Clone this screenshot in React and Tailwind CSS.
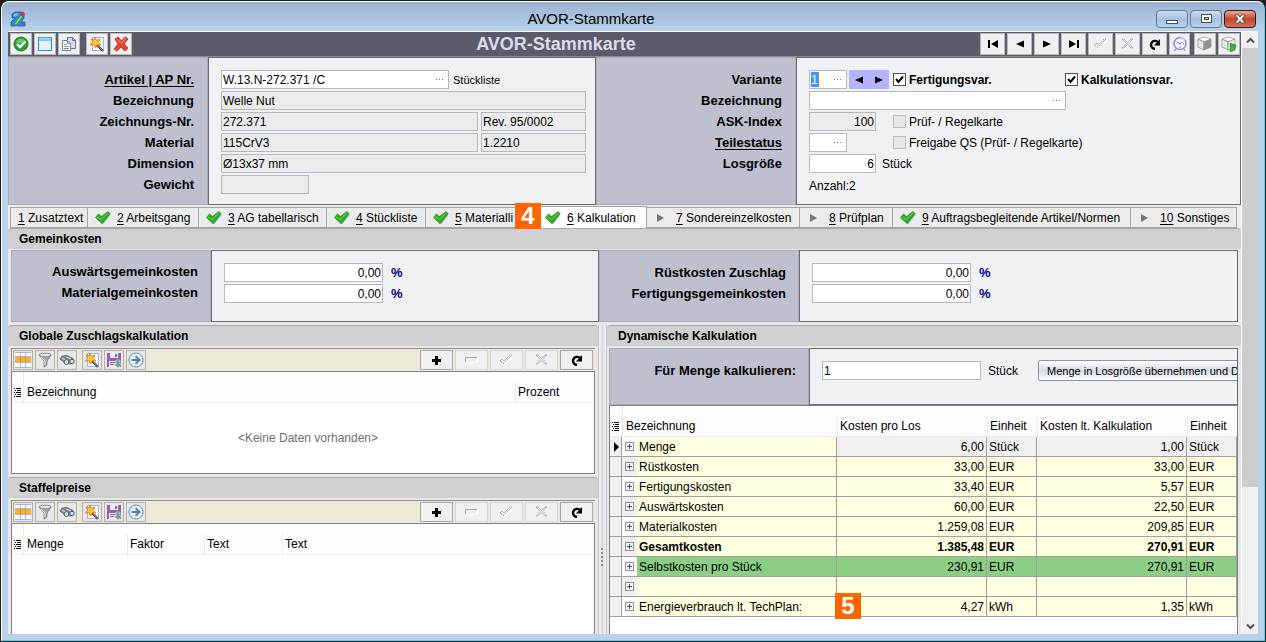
import React from 'react';
import clsx from 'clsx';

const tabs = [
  { key: '1', label: 'Zusatztext', width: 'w-[78px]' },
  { key: '2', label: 'Arbeitsgang', icon: 'check', width: 'w-[111px]' },
  { key: '3', label: 'AG tabellarisch', icon: 'check', width: 'w-[128px]' },
  { key: '4', label: 'Stückliste', icon: 'check', width: 'w-[99px]' },
  { key: '5', label: 'Materialli', icon: 'check', width: 'w-[112px]' },
  { key: '6', label: 'Kalkulation', icon: 'check', width: 'w-[109px]', active: true, badge: '4' },
  { key: '7', label: 'Sondereinzelkosten', icon: 'arrow', width: 'w-[153px]' },
  { key: '8', label: 'Prüfplan', icon: 'arrow', width: 'w-[93px]' },
  { key: '9', label: 'Auftragsbegleitende Artikel/Normen', icon: 'check', width: 'w-[238px]' },
  { key: '10', label: 'Sonstiges', icon: 'arrow', width: 'w-[106px]' }
];

const costRows = [
  { name: 'Menge', lot: '6,00', unit: 'Stück', calc: '1,00', kind: 'current' },
  { name: 'Rüstkosten', lot: '33,00', unit: 'EUR', calc: '33,00' },
  { name: 'Fertigungskosten', lot: '33,40', unit: 'EUR', calc: '5,57' },
  { name: 'Auswärtskosten', lot: '60,00', unit: 'EUR', calc: '22,50' },
  { name: 'Materialkosten', lot: '1.259,08', unit: 'EUR', calc: '209,85' },
  { name: 'Gesamtkosten', lot: '1.385,48', unit: 'EUR', calc: '270,91', kind: 'bold' },
  { name: 'Selbstkosten pro Stück', lot: '230,91', unit: 'EUR', calc: '270,91', kind: 'green' },
  { name: '', lot: '', unit: '', calc: '' },
  { name: 'Energieverbrauch lt. TechPlan:', lot: '4,27', unit: 'kWh', calc: '1,35', badge: '5' }
];

/* ---------- icons ---------- */

const AppIcon = () => (
  <svg width="16" height="16" viewBox="0 0 16 16" aria-hidden="true">
    <path d="M2 3l3-2h6l3 2v4l-3 4h4v4H8l-1-1-2 1H1v-4l4-4H2z" fill="#2f86d8" stroke="#1b4f96" strokeWidth=".7" />
    <path d="M3 4l3-2 3 1-4 3z" fill="#7fc0f2" />
    <path d="M5 12l6-8 2 1-6 8-3 1z" fill="#8ede5a" stroke="#3d8a25" strokeWidth=".5" />
    <circle cx="12.5" cy="3" r="2.200" fill="#e0343a" />
  </svg>
);

const OkIcon = () => (
  <svg width="16" height="16" viewBox="0 0 16 16" aria-hidden="true">
    <circle cx="8" cy="8" r="7" fill="#2d9e2d" stroke="#1d7a22" />
    <path d="M3 6a5.500 5.500 0 0 1 10 0c-3 2-7 2-10 0z" fill="#6cc765" />
    <path d="M4 8l3 3 5.500-5.500" fill="none" stroke="#fff" strokeWidth="2.400" />
  </svg>
);

const WindowIcon = () => (
  <svg width="16" height="16" viewBox="0 0 16 16" aria-hidden="true">
    <rect x="1.5" y="1.5" width="13" height="13" fill="#eaf0ff" stroke="#1e90ff" />
    <path d="M2 4h12" stroke="#1e90ff" />
    <path d="M2 2.500h12" stroke="#a8dcff" strokeWidth="1.5" />
  </svg>
);

const CopyIcon = () => (
  <svg width="16" height="16" viewBox="0 0 16 16" aria-hidden="true">
    <path d="M6.500 1.500h5l3 3v8h-8z" fill="#dcd6ee" stroke="#77699c" />
    <path d="M11.500 1.500v3h3" fill="none" stroke="#77699c" />
    <path d="M1.500 4.500h5l3 3v7h-8z" fill="#fff" stroke="#6f84ad" />
    <path d="M6.500 4.500v3h3M3 8.500h3M3 10.500h5M3 12.500h5" fill="none" stroke="#7b8fb5" />
  </svg>
);

const WandIcon = () => (
  <svg width="16" height="16" viewBox="0 0 16 16" aria-hidden="true">
    <rect x="3.5" y="1.5" width="11" height="13" fill="#f6f9ff" stroke="#9fb4e0" />
    <path d="M8 9l6 6" stroke="#4a4038" strokeWidth="2.2" />
    <path d="M9 10l5 5" stroke="#b9a88c" strokeWidth=".7" />
    <path d="M6 1l1.500 3.500L11 3l-1.500 3.500L12 9l-4-.2L6.500 12 5 8.800 1 9l2.800-3L2 3l3.200 1z" fill="#ffc93c" stroke="#e07a10" strokeWidth=".9" />
  </svg>
);

const DeleteIcon = () => (
  <svg width="16" height="16" viewBox="0 0 16 16" aria-hidden="true">
    <path d="M2 3l3-2 3.500 4L12 1l3 2-4 5 4 4-3 3-4-4-4 4-3-2 4-5z" fill="#e8452e" stroke="#b32313" strokeWidth=".8" />
    <path d="M3.500 3l5 4 4-4.500" fill="none" stroke="#ff9280" />
  </svg>
);

const FirstIcon = () => (
  <svg width="12" height="10" viewBox="0 0 12 10" aria-hidden="true">
    <path d="M1 1h2v8H1zM11 1v8L4 5z" fill="#000" />
  </svg>
);

const PrevIcon = () => (
  <svg width="10" height="10" viewBox="0 0 10 10" aria-hidden="true">
    <path d="M9 1.500v7L1 5z" fill="#000" />
  </svg>
);

const NextIcon = () => (
  <svg width="10" height="10" viewBox="0 0 10 10" aria-hidden="true">
    <path d="M1 1.500v7L9 5z" fill="#000" />
  </svg>
);

const LastIcon = () => (
  <svg width="12" height="10" viewBox="0 0 12 10" aria-hidden="true">
    <path d="M9 1h2v8H9zM1 1v8l7-4z" fill="#000" />
  </svg>
);

const PostIcon = () => (
  <svg width="15" height="12" viewBox="0 0 15 12" aria-hidden="true">
    <path d="M2 8l2-2 2 2 6-6 2 1-8 8z" fill="#fff" />
    <path d="M1 7l2-2 2 2 6-6h2L5 9.500z" fill="#f3f3f3" stroke="#a0a0a0" strokeDasharray="2 1" />
  </svg>
);

const CancelIcon = () => (
  <svg width="13" height="12" viewBox="0 0 13 12" aria-hidden="true">
    <path d="M3 2l9 9M12 2l-9 9" stroke="#fff" strokeWidth="2" />
    <path d="M1 1h2l3.500 3.500L10 1h2L8 5.500l4 4.500h-2L6.500 6.500 3 10H1l4-4.500z" fill="#f0f0f0" stroke="#a4a4a4" strokeWidth=".8" />
  </svg>
);

const RefreshIcon = () => (
  <svg width="12" height="12" viewBox="0 0 12 12" aria-hidden="true">
    <path d="M6 11C2.500 10.500 1.300 7.500 2.500 5 3.800 2.600 6.800 2.200 9 4" fill="none" stroke="#000" strokeWidth="2.4" />
    <path d="M11 1v6.500H5z" fill="#000" />
  </svg>
);

const ClockIcon = () => (
  <svg width="16" height="16" viewBox="0 0 16 16" aria-hidden="true">
    <path d="M4 13l-2 2M12 13l1 2" stroke="#9a9acb" strokeWidth="1.5" />
    <circle cx="8" cy="7.500" r="6" fill="#edf0ff" stroke="#8c8fd0" strokeWidth="1.5" />
    <path d="M5 6l3 2 2-2M8 12v-1M12 8h-1" fill="none" stroke="#6b7099" />
    <path d="M9 1l4 3" stroke="#c9cdf6" strokeWidth="2" />
  </svg>
);

const CubeIcon = ({ green }) => (
  <svg width="16" height="16" viewBox="0 0 16 16" aria-hidden="true">
    <path d="M1 3l6-2 7 2-6 3z" fill="#fafafa" stroke="#9b9b9b" strokeWidth=".7" />
    <path d="M1 3l6 3v8l-6-3z" fill="#dcdee0" stroke="#8d8d8d" strokeWidth=".7" />
    <path d="M7 6l7-3v8l-7 3z" fill={green ? '#f1f1f1' : '#8f9295'} stroke="#8a8a8a" strokeWidth=".7" />
    <path d="M2 5v5M4 6v5M5.500 6v6" stroke="#f4f4f4" strokeWidth=".8" />
    {green && <path d="M9 7l6 2-1 5-5 2z" fill="#3fae35" stroke="#2a8323" strokeWidth=".5" />}
  </svg>
);

const GridIcon = () => (
  <svg width="16" height="16" viewBox="0 0 16 16" aria-hidden="true">
    <rect width="16" height="16" fill="#aeb4c4" />
    <path d="M0 1h5v3H0zM6 1h4v3H6zM11 1h5v3h-5zM0 11h5v4H0zM6 11h4v4H6zM11 11h5v4h-5z" fill="#fff" />
    <path d="M0 5h16v5H0z" fill="#f7ac3e" />
    <path d="M5.500 5v5M10.500 5v5" stroke="#d98c23" />
  </svg>
);

const FilterIcon = () => (
  <svg width="16" height="16" viewBox="0 0 16 16" aria-hidden="true">
    <path d="M2 3l5 6v6l3-2V9l4-6z" fill="#a9a9a9" stroke="#6f6f6f" strokeWidth=".8" />
    <path d="M4 5l4 4v4" fill="none" stroke="#eee" />
    <ellipse cx="8" cy="3" rx="6" ry="1.800" fill="#e4e4e4" stroke="#777" strokeWidth=".8" />
  </svg>
);

const BinocularsIcon = () => (
  <svg width="16" height="16" viewBox="0 0 16 16" aria-hidden="true">
    <path d="M1 7l2-3 5-.5 6 3 .5 4-3 1.500L6 11z" fill="#85898d" stroke="#5f6367" strokeWidth=".8" />
    <path d="M3 6l5 3M7 5l5 2" stroke="#e4e6e8" />
    <circle cx="7.500" cy="10" r="2.400" fill="#cfe2f2" stroke="#4f5b66" />
    <circle cx="13" cy="9.500" r="2.300" fill="#cfe2f2" stroke="#4f5b66" />
  </svg>
);

const SaveIcon = () => (
  <svg width="16" height="16" viewBox="0 0 16 16" aria-hidden="true">
    <path d="M1 1h14v14H1z" fill="#8e63ad" />
    <path d="M4 1h8v5H4zM3 9h10v6H3z" fill="#f2ecf7" />
    <path d="M9 2h2v3H9zM4 10h7v1H4zM4 12h5v1H4z" fill="#8e63ad" />
    <path d="M10 8h4v4h2l-4 4-4-4h2z" fill="#6aa58c" stroke="#f0f0f0" strokeWidth=".5" />
  </svg>
);

const GoIcon = () => (
  <svg width="16" height="16" viewBox="0 0 16 16" aria-hidden="true">
    <circle cx="8" cy="8" r="7" fill="#fafcff" stroke="#4d88c0" />
    <path d="M3.500 8h7M7.500 4l4 4-4 4" fill="none" stroke="#3f7fbe" strokeWidth="2" />
  </svg>
);

const GreenCheck = () => (
  <svg width="16" height="14" viewBox="0 0 16 14" aria-hidden="true">
    <path d="M2 8l2-2 3 2.500L14 2l1.500 2L8 13.500z" fill="#666" opacity=".5" />
    <path d="M.5 6.500L3.500 3l3 2.500L13 .5l2 2-8 10z" fill="#2bb021" stroke="#1f8a1b" strokeWidth=".7" />
    <path d="M2 6.200l4.500 2L13 2" fill="none" stroke="#74d866" strokeWidth=".9" />
  </svg>
);

const ListIcon = () => (
  <svg width="7" height="9" viewBox="0 0 7 9" aria-hidden="true" className="shrink-0">
    <path d="M0 .5h1M2 .5h5M1 2.500h1M3 2.500h4M0 4.500h1M2 4.500h5M1 6.500h1M3 6.500h4M0 8.500h1M2 8.500h5" stroke="#000" />
  </svg>
);

const ExpandIcon = () => (
  <svg width="9" height="9" viewBox="0 0 9 9" aria-hidden="true">
    <rect x=".5" y=".5" width="8" height="8" fill="#fbfbfb" stroke="#919191" />
    <path d="M2 4.500h5M4.500 2v5" stroke="#35508f" />
  </svg>
);

/* ---------- building blocks ---------- */

const ToolButton = ({ label, className, children }) => (
  <button
    type="button"
    aria-label={label}
    className={clsx('flex h-[22px] shrink-0 items-center justify-center border border-[#b9b9b9] bg-[#f0f0f0]', className)}
  >
    {children}
  </button>
);

const LookupButton = () => (
  <button type="button" aria-label="Auswählen" className="flex h-full w-4 shrink-0 items-center justify-center">
    <svg width="8" height="2" viewBox="0 0 8 2" aria-hidden="true">
      <path d="M0 0h1v1H0zM3 0h1v1H3zM6 0h1v1H6z" fill="#777" />
    </svg>
  </button>
);

const Field = ({ id, label, value = '', editable, right, lookup, className }) => (
  <div
    className={clsx(
      'flex h-[19px] shrink-0 items-center border border-[#b5b9c1]',
      editable ? 'bg-white' : 'bg-[#ebebec]',
      className
    )}
  >
    <input
      id={id}
      aria-label={label}
      type="text"
      defaultValue={value}
      readOnly={!editable}
      className={clsx('h-full w-full min-w-0 bg-transparent px-px outline-none', right && 'text-right')}
    />
    {lookup && <LookupButton />}
  </div>
);

const CheckField = ({ label, checked, bold, className }) => (
  <label className={clsx('flex shrink-0 items-center gap-[3px] whitespace-nowrap', bold && 'font-bold', className)}>
    <span className="relative flex size-[13px]">
      <input
        type="checkbox"
        defaultChecked={checked}
        disabled={!checked}
        className="peer size-[13px] appearance-none border border-[#555] bg-white disabled:border-[#bcbcbc] disabled:bg-[#e6e6e6]"
      />
      <svg viewBox="0 0 13 13" className="pointer-events-none absolute inset-0 hidden peer-checked:block" aria-hidden="true">
        <path d="M3 6l2.500 3L10 3.500" fill="none" stroke="#000" strokeWidth="2" />
      </svg>
    </span>
    {label}
  </label>
);

const LabelColumn = ({ items, className }) => (
  <div className={clsx('flex flex-col items-end gap-0.5 border border-[#a9abbb] bg-[#bec0cf] text-[13px] font-bold', className)}>
    {items.map(item => (
      <label
        key={item.id}
        htmlFor={item.id}
        className={clsx('flex h-[19px] items-center whitespace-nowrap', item.link && 'underline underline-offset-2')}
      >
        {item.text}
      </label>
    ))}
  </div>
);

const SectionTitle = ({ children }) => (
  <h2 className="flex h-[21px] shrink-0 items-center rounded-t-sm border-t border-[#a8a8a8] bg-[#d0d0d0] pl-[11px] text-xs font-bold">
    {children}
  </h2>
);

const Badge = ({ children, className }) => (
  <span className={clsx('absolute z-10 flex size-[26px] items-center justify-center bg-[#ff6600] text-2xl leading-none font-bold text-white', className)}>
    {children}
  </span>
);

const PercentField = ({ id }) => (
  <div className="flex items-center gap-2">
    <Field id={id} value="0,00" editable right className="w-[159px]" />
    <span className="text-[13px] font-bold text-[#00008b]">%</span>
  </div>
);

const SmallButton = ({ label, className, children }) => (
  <button
    type="button"
    aria-label={label}
    className={clsx('flex size-5 items-center justify-center border border-[#b0b0b0] bg-[#e8e8e8]', className)}
  >
    {children}
  </button>
);

const WideButton = ({ label, disabled, children }) => (
  <button
    type="button"
    aria-label={label}
    disabled={disabled}
    className="flex h-5 w-[33px] items-center justify-center border border-[#a8a8a8] bg-[#f0f0f0] disabled:border-[#d8d8d8]"
  >
    {children}
  </button>
);

const GridToolbar = () => (
  <div className="flex h-[23px] shrink-0 items-start justify-between border-t border-l border-[#8f8f94] bg-[#ece9d8] pt-px pr-0.5 pl-px">
    <div className="flex gap-0.5">
      <SmallButton label="Spalten"><GridIcon /></SmallButton>
      <SmallButton label="Filter"><FilterIcon /></SmallButton>
      <SmallButton label="Suchen"><BinocularsIcon /></SmallButton>
      <SmallButton label="Assistent" className="ml-[3px]"><WandIcon /></SmallButton>
      <SmallButton label="Speichern"><SaveIcon /></SmallButton>
      <SmallButton label="Weiter"><GoIcon /></SmallButton>
    </div>
    <div className="flex gap-0.5">
      <WideButton label="Hinzufügen">
        <svg width="9" height="9" viewBox="0 0 9 9" aria-hidden="true">
          <path d="M3 0h3v3h3v3H6v3H3V6H0V3h3z" fill="#000" />
        </svg>
      </WideButton>
      <WideButton label="Entfernen" disabled>
        <svg width="13" height="6" viewBox="0 0 13 6" aria-hidden="true">
          <path d="M1 5.500h11.500V1" fill="none" stroke="#fff" />
          <path d="M.5 5V.5H12" fill="none" stroke="#a9a9a9" />
        </svg>
      </WideButton>
      <WideButton label="Übernehmen" disabled><PostIcon /></WideButton>
      <WideButton label="Abbrechen" disabled><CancelIcon /></WideButton>
      <WideButton label="Aktualisieren"><RefreshIcon /></WideButton>
    </div>
  </div>
);

const HeadCell = ({ children, first }) => (
  <th scope="col" className="h-[31px] border-b border-[#e3eefb] bg-[#fdfdfd] p-0 text-left font-normal">
    <div className={clsx('flex h-[30px] flex-col justify-end', first && 'border-l border-[#e3eefb]')}>
      <div className={clsx('flex h-5 items-center whitespace-nowrap', first ? 'pl-[3px]' : 'border-l border-[#e3eefb] pl-0.5')}>
        {children}
      </div>
    </div>
  </th>
);

const ListHead = () => (
  <th scope="col" aria-label="Zeilen" className="h-[31px] border-b border-[#e3eefb] bg-[#fdfdfd] p-0 pt-2.5">
    <div className="flex h-5 items-center pl-0.5"><ListIcon /></div>
  </th>
);

/* ---------- page parts ---------- */

const TitleBar = () => (
  <header className="flex h-[29px] shrink-0 items-center bg-gradient-to-b from-[#99b3d2] to-[#b9d1ea] pt-1 pr-2 pl-2">
    <AppIcon />
    <div className="flex-1 text-center text-[15px]">AVOR-Stammkarte</div>
    <div className="flex gap-0.5">
      <button type="button" aria-label="Minimieren" className="flex h-[18px] w-8 items-end justify-center rounded-sm border border-[#5d7898] bg-gradient-to-b from-[#cfdff1] via-[#a5bfdd] to-[#bdd5ec] pb-[3px]">
        <span className="h-1 w-3 border border-[#44505f] bg-white" />
      </button>
      <button type="button" aria-label="Maximieren" className="flex h-[18px] w-8 items-center justify-center rounded-sm border border-[#5d7898] bg-gradient-to-b from-[#cfdff1] via-[#a5bfdd] to-[#bdd5ec]">
        <svg width="11" height="9" viewBox="0 0 11 9" aria-hidden="true">
          <rect x=".5" y=".5" width="10" height="8" fill="#fff" stroke="#44505f" />
          <rect x="3.500" y="3.500" width="4" height="2" fill="#a5bfdd" stroke="#44505f" />
        </svg>
      </button>
      <button type="button" aria-label="Schließen" className="flex h-[18px] w-8 items-center justify-center rounded-sm border border-[#43131a] bg-gradient-to-b from-[#e6a79b] via-[#c4412d] to-[#d2705a]">
        <svg width="12" height="10" viewBox="0 0 13 10" aria-hidden="true">
          <path d="M1 .5h3.500l2 2.500 2-2.500H12L8.500 5 12 9.500H8.500l-2-2.500-2 2.500H1L4.500 5z" fill="#fff" stroke="#4b4550" strokeWidth=".9" />
        </svg>
      </button>
    </div>
  </header>
);

const MainToolbar = () => (
  <div className="flex h-[25px] shrink-0 items-center border-b border-[#8e8e92] bg-[#5a5c6c] pr-px pl-0.5">
    <div className="flex gap-0.5">
      <ToolButton label="OK" className="w-[22px]"><OkIcon /></ToolButton>
      <ToolButton label="Fenster" className="w-[22px]"><WindowIcon /></ToolButton>
      <ToolButton label="Kopieren" className="w-[22px]"><CopyIcon /></ToolButton>
      <ToolButton label="Assistent" className="ml-1 w-[22px]"><WandIcon /></ToolButton>
      <ToolButton label="Löschen" className="w-[22px]"><DeleteIcon /></ToolButton>
    </div>
    <h1 className="flex-1 text-center text-lg leading-none font-bold text-[#dcdce6]">AVOR-Stammkarte</h1>
    <div className="flex gap-0.5">
      <ToolButton label="Erster" className="w-[25px]"><FirstIcon /></ToolButton>
      <ToolButton label="Zurück" className="w-[25px]"><PrevIcon /></ToolButton>
      <ToolButton label="Vor" className="w-[25px]"><NextIcon /></ToolButton>
      <ToolButton label="Letzter" className="w-[25px]"><LastIcon /></ToolButton>
      <ToolButton label="Übernehmen" className="w-[25px]"><PostIcon /></ToolButton>
      <ToolButton label="Abbrechen" className="w-[25px]"><CancelIcon /></ToolButton>
      <ToolButton label="Aktualisieren" className="w-[25px]"><RefreshIcon /></ToolButton>
      <ToolButton label="Historie" className="w-[21px]"><ClockIcon /></ToolButton>
      <ToolButton label="Teil" className="ml-0.5 w-[22px]"><CubeIcon /></ToolButton>
      <ToolButton label="Teil übernehmen" className="w-[22px]"><CubeIcon green /></ToolButton>
    </div>
  </div>
);

const ArticleHeader = () => (
  <section className="grid shrink-0 grid-cols-[200px_388px_200px_1fr]">
    <LabelColumn
      className="pt-3 pr-[13px]"
      items={[
        { id: 'artikel', text: 'Artikel | AP Nr.', link: true },
        { id: 'bezeichnung', text: 'Bezeichnung' },
        { id: 'zeichnung', text: 'Zeichnungs-Nr.' },
        { id: 'material', text: 'Material' },
        { id: 'dimension', text: 'Dimension' },
        { id: 'gewicht', text: 'Gewicht' }
      ]}
    />
    <div className="flex flex-col gap-0.5 border border-[#6b6c72] bg-[#f0f1f3] pt-3 pb-2.5 pl-3">
      <div className="flex items-center gap-1">
        <Field id="artikel" value="W.13.N-272.371 /C" editable lookup className="w-[228px]" />
        <span className="text-[11px]">Stückliste</span>
      </div>
      <Field id="bezeichnung" value="Welle Nut" className="w-[365px]" />
      <div className="flex gap-[3px]">
        <Field id="zeichnung" value="272.371" className="w-[257px]" />
        <Field label="Revision" value="Rev. 95/0002" className="w-[105px]" />
      </div>
      <div className="flex gap-[3px]">
        <Field id="material" value="115CrV3" className="w-[257px]" />
        <Field label="Werkstoffnummer" value="1.2210" className="w-[105px]" />
      </div>
      <Field id="dimension" value="Ø13x37 mm" className="w-[365px]" />
      <Field id="gewicht" className="w-[88px]" />
    </div>
    <LabelColumn
      className="pt-3 pr-[13px]"
      items={[
        { id: 'variante', text: 'Variante' },
        { id: 'variante-bez', text: 'Bezeichnung' },
        { id: 'ask', text: 'ASK-Index' },
        { id: 'teilestatus', text: 'Teilestatus', link: true },
        { id: 'losgroesse', text: 'Losgröße' }
      ]}
    />
    <div className="flex min-w-0 flex-col gap-0.5 overflow-hidden border border-[#6b6c72] bg-[#f0f1f3] pt-3 pb-2.5 pl-3">
      <div className="flex items-center">
        <div className="flex h-[19px] w-[38px] items-center justify-between border border-[#b5b9c1] bg-white pl-px">
          <input id="variante" type="text" defaultValue="1" className="h-[15px] w-2 border-r border-[#e08020] bg-[#3399ff] text-white outline-none" />
          <LookupButton />
        </div>
        <div className="mr-1 ml-0.5 flex h-[19px] w-10 items-center justify-around bg-[#b3b3ff]">
          <button type="button" aria-label="Vorherige Variante"><PrevIcon /></button>
          <button type="button" aria-label="Nächste Variante"><NextIcon /></button>
        </div>
        <CheckField label="Fertigungsvar." checked bold className="w-[172px]" />
        <CheckField label="Kalkulationsvar." checked bold />
      </div>
      <Field id="variante-bez" editable lookup className="w-[257px]" />
      <div className="flex items-center">
        <Field id="ask" value="100" right className="mr-[17px] w-[67px]" />
        <CheckField label="Prüf- / Regelkarte" />
      </div>
      <div className="flex items-center">
        <Field id="teilestatus" editable lookup className="mr-[46px] w-[38px]" />
        <CheckField label="Freigabe QS (Prüf- / Regelkarte)" />
      </div>
      <div className="flex items-center gap-1.5">
        <Field id="losgroesse" value="6" editable right className="w-[67px]" />
        <span>Stück</span>
      </div>
      <div className="flex h-[19px] items-end">Anzahl:2</div>
    </div>
  </section>
);

const TabBar = () => (
  <div role="tablist" className="flex h-[23px] shrink-0 items-end bg-[#ececee] pl-0.5">
    {tabs.map(tab => (
      <button
        key={tab.key}
        type="button"
        role="tab"
        aria-selected={!!tab.active}
        className={clsx(
          'relative flex shrink-0 items-center border-t border-r border-[#a5a5a5] pl-[7px] whitespace-nowrap',
          tab.active ? 'h-[22px] bg-white' : 'h-[21px] border-b bg-[#ebebeb]',
          tab.key === '1' && 'border-l',
          tab.width
        )}
      >
        {tab.icon && (
          <span className="flex w-[22px] shrink-0">
            {tab.icon === 'check' ? <GreenCheck /> : (
              <svg width="12" height="8" viewBox="0 0 12 8" aria-hidden="true">
                <path d="M3 0v8l7-4z" fill="#777" />
              </svg>
            )}
          </span>
        )}
        <span><u className="underline-offset-2">{tab.key}</u> {tab.label}</span>
        {tab.badge && <Badge className="-top-1 -left-[23px]">{tab.badge}</Badge>}
      </button>
    ))}
  </div>
);

const OverheadSection = () => (
  <section className="shrink-0 pb-[3px]">
    <SectionTitle>Gemeinkosten</SectionTitle>
    <div className="mx-[3px] mt-px grid grid-cols-[200px_388px_200px_1fr]">
      <LabelColumn
        className="pt-[11px] pr-3"
        items={[
          { id: 'auswaerts', text: 'Auswärtsgemeinkosten' },
          { id: 'materialgk', text: 'Materialgemeinkosten' }
        ]}
      />
      <div className="flex flex-col gap-0.5 border border-[#6b6c72] bg-[#f0f1f3] pt-3 pb-[18px] pl-3">
        <PercentField id="auswaerts" />
        <PercentField id="materialgk" />
      </div>
      <LabelColumn
        className="pt-3 pr-3"
        items={[
          { id: 'ruest', text: 'Rüstkosten Zuschlag' },
          { id: 'fertigung', text: 'Fertigungsgemeinkosten' }
        ]}
      />
      <div className="flex flex-col gap-0.5 border border-[#6b6c72] bg-[#f0f1f3] pt-3 pb-[18px] pl-3">
        <PercentField id="ruest" />
        <PercentField id="fertigung" />
      </div>
    </div>
  </section>
);

const SurchargePanel = () => (
  <section className="flex shrink-0 flex-col pb-[3px]">
    <SectionTitle>Globale Zuschlagskalkulation</SectionTitle>
    <div className="mx-[3px] mt-0.5 flex flex-col">
      <GridToolbar />
      <div className="border border-[#7f808c] bg-white">
        <table className="w-full table-fixed border-separate border-spacing-0">
          <colgroup>
            <col className="w-[11px]" />
            <col />
            <col className="w-[79px]" />
          </colgroup>
          <thead>
            <tr>
              <ListHead />
              <HeadCell first>Bezeichnung</HeadCell>
              <HeadCell>Prozent</HeadCell>
            </tr>
          </thead>
          <tbody>
            <tr>
              <td colSpan={3} className="h-[70px] p-0 pl-2.5 text-center text-[#6e6e6e]">&lt;Keine Daten vorhanden&gt;</td>
            </tr>
          </tbody>
        </table>
      </div>
    </div>
  </section>
);

const PricePanel = () => (
  <section className="flex min-h-0 flex-1 flex-col">
    <SectionTitle>Staffelpreise</SectionTitle>
    <div className="mx-[3px] mt-0.5 flex min-h-0 flex-1 flex-col">
      <GridToolbar />
      <div className="flex-1 border border-b-0 border-[#7f808c] bg-white">
        <table className="w-full table-fixed border-separate border-spacing-0">
          <colgroup>
            <col className="w-[11px]" />
            <col className="w-[104px]" />
            <col className="w-[77px]" />
            <col className="w-[78px]" />
            <col />
          </colgroup>
          <thead>
            <tr>
              <ListHead />
              <HeadCell first>Menge</HeadCell>
              <HeadCell>Faktor</HeadCell>
              <HeadCell>Text</HeadCell>
              <HeadCell>Text</HeadCell>
            </tr>
          </thead>
        </table>
      </div>
    </div>
  </section>
);

const CostRow = ({ row, index }) => {
  const cell = clsx(
    'h-5 border-r border-b border-[#a0a0a0] p-0',
    row.kind === 'current' && 'bg-[#f0f0f0]',
    row.kind === 'green' && 'bg-[#8bcf85]',
    row.kind !== 'current' && row.kind !== 'green' && 'bg-[#ffffe1]',
    row.kind === 'bold' && 'font-bold'
  );

  return (
    <tr>
      <td className="h-5 border-r border-b border-[#a0a0a0] bg-[#f0f0f0] p-0">
        {row.kind === 'current' && (
          <svg width="11" height="10" viewBox="0 0 11 10" aria-hidden="true">
            <path d="M4 0v10l5-5z" fill="#000" />
          </svg>
        )}
      </td>
      <td className={clsx('h-5 border-r border-b border-[#a0a0a0] p-0', row.kind === 'bold' && 'font-bold')}>
        <div className="flex h-[19px] items-center">
          <button
            type="button"
            aria-label="Aufklappen"
            className={clsx('flex h-full w-[15px] shrink-0 items-center justify-center', index % 2 ? 'bg-[#f0f0f0]' : 'bg-white')}
          >
            <ExpandIcon />
          </button>
          <span className={clsx('flex h-full flex-1 items-center pl-0.5 whitespace-nowrap', row.kind === 'green' ? 'bg-[#8bcf85]' : 'bg-[#ffffe1]')}>
            {row.name}
          </span>
        </div>
      </td>
      <td className={clsx(cell, 'relative pr-0.5 text-right')}>
        {row.lot}
        {row.badge && <Badge className="-top-1 -left-0.5">{row.badge}</Badge>}
      </td>
      <td className={clsx(cell, 'pl-0.5')}>{row.unit}</td>
      <td className={clsx(cell, 'pr-0.5 text-right')}>{row.calc}</td>
      <td className={clsx(cell, 'pl-0.5')}>{row.unit}</td>
    </tr>
  );
};

const CalculationPanel = () => (
  <section className="flex min-w-0 flex-col">
    <SectionTitle>Dynamische Kalkulation</SectionTitle>
    <div className="mt-0.5 mr-[3px] ml-0.5 flex min-h-0 flex-1 flex-col">
      <div className="grid h-[57px] shrink-0 grid-cols-[200px_1fr]">
        <LabelColumn className="pt-3 pr-3" items={[{ id: 'menge', text: 'Für Menge kalkulieren:' }]} />
        <div className="flex min-w-0 items-start overflow-hidden border border-[#6b6c72] bg-[#f0f1f3] pt-[11px] pl-3">
          <div className="flex h-[21px] items-center gap-[7px]">
            <Field id="menge" value="1" editable className="w-[159px]" />
            <span className="w-[43px]">Stück</span>
            <button type="button" className="h-[21px] w-[280px] shrink-0 rounded-xs border border-[#8d95a5] bg-gradient-to-b from-white via-[#d3dbe5] to-white pl-2 text-left text-[11px] whitespace-nowrap">
              Menge in Losgröße übernehmen und D
            </button>
          </div>
        </div>
      </div>
      <div className="flex-1 border border-b-0 border-[#7f808c] bg-white">
        <table className="w-full table-fixed border-separate border-spacing-0">
          <colgroup>
            <col className="w-3" />
            <col />
            <col className="w-[150px]" />
            <col className="w-[50px]" />
            <col className="w-[150px]" />
            <col className="w-[50px]" />
          </colgroup>
          <thead>
            <tr>
              <ListHead />
              <HeadCell first>Bezeichnung</HeadCell>
              <HeadCell>Kosten pro Los</HeadCell>
              <HeadCell>Einheit</HeadCell>
              <HeadCell>Kosten lt. Kalkulation</HeadCell>
              <HeadCell>Einheit</HeadCell>
            </tr>
          </thead>
          <tbody>
            {costRows.map((row, index) => (
              <CostRow key={index} row={row} index={index} />
            ))}
          </tbody>
        </table>
      </div>
    </div>
  </section>
);

const Splitter = () => (
  <div className="flex justify-center border-x border-[#c4c4c8] bg-gradient-to-r from-[#f4f4f6] via-[#d9dbe1] to-[#f4f4f6] pt-[223px]">
    <svg width="3" height="20" viewBox="0 0 3 20" aria-hidden="true">
      <path d="M0 1h2M0 5h2M0 9h2M0 13h2M0 17h2" stroke="#8a8a90" strokeWidth="2" />
    </svg>
  </div>
);

const Scrollbar = () => (
  <div className="flex w-[17px] shrink-0 flex-col border-l border-white bg-[#f0f0f0]" aria-hidden="true">
    <div className="flex h-4 items-center justify-center">
      <svg width="9" height="7" viewBox="0 0 9 7"><path d="M1 5.500L4.500 2 8 5.500" fill="none" stroke="#505050" strokeWidth="2" /></svg>
    </div>
    <div className="min-h-0 flex-1">
      <div className="h-[77%] bg-[#cdcdcd]" />
    </div>
    <div className="flex h-4 items-center justify-center">
      <svg width="9" height="7" viewBox="0 0 9 7"><path d="M1 1.500L4.500 5 8 1.500" fill="none" stroke="#505050" strokeWidth="2" /></svg>
    </div>
  </div>
);

const App = () => (
  <div className="flex h-screen flex-col overflow-hidden bg-[#1d1a22] p-px font-['Liberation_Sans',Arial,sans-serif] text-xs leading-4 text-black">
    <div className="flex min-h-0 flex-1 flex-col overflow-hidden rounded-t-lg border border-t-white border-r-[#3fd8f5] border-b-[#3fd8f5] border-l-white bg-[#b9d1ea]">
      <TitleBar />
      <div className="mx-1.5 mb-1.5 flex min-h-0 flex-1 border-t border-white bg-[#e8e8ea]">
        <main className="flex min-w-0 flex-1 flex-col">
          <MainToolbar />
          <ArticleHeader />
          <TabBar />
          <OverheadSection />
          <div className="grid min-h-0 flex-1 grid-cols-[590px_9px_1fr]">
            <div className="flex min-h-0 flex-col">
              <SurchargePanel />
              <PricePanel />
            </div>
            <Splitter />
            <CalculationPanel />
          </div>
        </main>
        <Scrollbar />
      </div>
    </div>
  </div>
);

export default App;
